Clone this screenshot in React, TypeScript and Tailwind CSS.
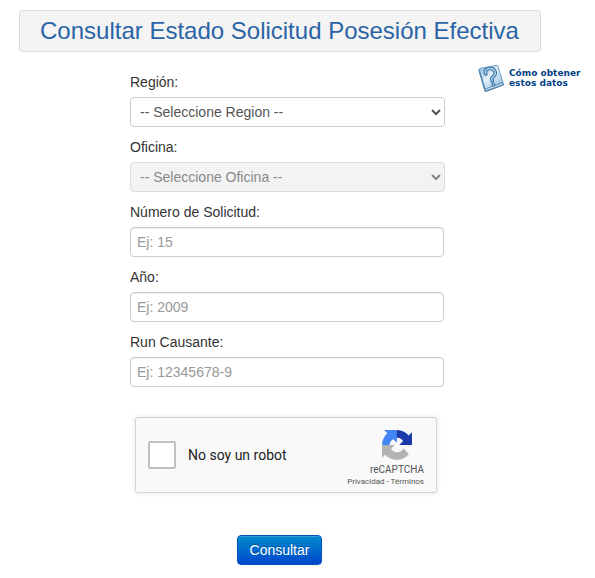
import React, { useState } from 'react';

interface TextField {
  id: string;
  label: string;
  placeholder: string;
}

const textFields: TextField[] = [
  { id: 'numero', label: 'Número de Solicitud:', placeholder: 'Ej: 15' },
  { id: 'anio', label: 'Año:', placeholder: 'Ej: 2009' },
  { id: 'run', label: 'Run Causante:', placeholder: 'Ej: 12345678-9' },
];

const BookIcon: React.FC = () => (
  <svg className="w-7 h-7 shrink-0" viewBox="0 0 28 28" fill="none" aria-hidden="true">
    <defs>
      <linearGradient id="cover" x1="3" y1="3" x2="23" y2="25" gradientUnits="userSpaceOnUse">
        <stop stopColor="#8fbbdc" />
        <stop offset="0.45" stopColor="#e3f0f9" />
        <stop offset="1" stopColor="#94bcdb" />
      </linearGradient>
    </defs>
    <path d="M1.500 5.500L7.500 27Q8 28.300 9.500 27.800L26.500 21.500Q27.300 21 26.800 19.500L25.500 16.500Z" fill="#4a7ba5" />
    <path d="M8.500 25L25.500 19L26 20.500L9 26.600Z" fill="#b9d4e8" />
    <path d="M2 6Q1.700 4.900 3 4.500L19 1.400Q20.500 1.100 20.900 2.400L25.500 17Q25.800 18 24.700 18.500L9.500 24.500Q8 25 7.500 23.700Z" fill="url(#cover)" stroke="#6d9dc4" />
    <path d="M2.200 6.500L7.800 25" stroke="#5189b5" strokeWidth="1.500" />
    <path d="M8.800 9.800C7 6.500 10 4.300 13.500 4.500C18 4.800 19.500 9.200 17 11.700C15 13.600 14.300 14.300 15.300 16.800" stroke="#34709f" strokeWidth="3.600" strokeLinecap="round" />
    <path d="M8.800 9.800C7 6.500 10 4.300 13.500 4.500C18 4.800 19.500 9.200 17 11.700C15 13.600 14.300 14.300 15.300 16.800" stroke="#b5d6ec" strokeWidth="1.400" strokeLinecap="round" />
    <circle cx="16.300" cy="20.500" r="1.500" fill="#8fbde0" stroke="#34709f" />
  </svg>
);

const RecaptchaLogo: React.FC = () => (
  <svg className="w-[30px] h-[30px]" viewBox="0 0 64 64" aria-hidden="true">
    <path
      fill="#1c3aa9"
      d="M64 31.955l-.033-1.37V4.687l-7.16 7.16C50.948 4.674 42.033.093 32.05.093c-10.4 0-19.622 4.96-25.458 12.64l11.736 11.86a15.55 15.55 0 0 1 4.754-5.334c2.05-1.6 4.952-2.906 8.968-2.906.485 0 .86.057 1.135.163 4.976.393 9.288 3.14 11.828 7.124l-8.307 8.307L64 31.953"
    />
    <path
      fill="#4285f4"
      d="M31.862.094l-1.37.033H4.594l7.16 7.16C4.58 13.147 0 22.06 0 32.046c0 10.4 4.96 19.622 12.64 25.458L24.5 45.768a15.55 15.55 0 0 1-5.334-4.754c-1.6-2.05-2.906-4.952-2.906-8.968 0-.485.057-.86.163-1.135.393-4.976 3.14-9.288 7.124-11.828l8.307 8.307L31.86.095"
    />
    <path
      fill="#b3b3b3"
      d="M.001 32.045l.033 1.37v25.898l7.16-7.16c5.86 7.173 14.774 11.754 24.76 11.754 10.4 0 19.622-4.96 25.458-12.64l-11.736-11.86a15.55 15.55 0 0 1-4.754 5.334c-2.05 1.6-4.952 2.906-8.968 2.906-.485 0-.86-.057-1.135-.163-4.976-.393-9.288-3.14-11.828-7.124l8.307-8.307c-10.522.04-22.4.066-27.295-.005"
    />
  </svg>
);

const App: React.FC = () => {
  const [region, setRegion] = useState('');
  const [values, setValues] = useState<Record<string, string>>({});
  const [isHuman, setIsHuman] = useState(false);

  const handleSubmit = (e: React.FormEvent) => {
    e.preventDefault();
  };

  return (
    <div className="min-h-screen bg-white pt-[10px] pb-3 font-['Liberation_Sans',Arial,sans-serif] text-sm leading-5 text-[#333333]">
      <header className="ml-[19px] mr-[54px] h-[42px] px-5 flex items-center border border-[#dddddd] rounded bg-[#f4f4f4]">
        <h1 className="text-2xl leading-10 text-[#2a64a7] whitespace-nowrap">
          Consultar Estado Solicitud Posesión Efectiva
        </h1>
      </header>

      <main className="mt-5 pl-[130px] pr-4 flex items-start gap-8">
        <form onSubmit={handleSubmit} className="flex-1 max-w-[400px]">
          <div className="flex flex-col gap-[10px]">
            <div className="flex flex-col gap-[5px]">
              <label htmlFor="region">Región:</label>
              <select
                id="region"
                value={region}
                onChange={(e) => setRegion(e.target.value)}
                className="h-[30px] px-[5px] border border-[#cccccc] rounded bg-white text-[#555555]"
              >
                <option value="">-- Seleccione Region --</option>
              </select>
            </div>

            <div className="flex flex-col gap-[5px]">
              <label htmlFor="oficina">Oficina:</label>
              <select
                id="oficina"
                disabled
                className="h-[30px] px-[5px] border border-[#cccccc] rounded bg-[#eeeeee] text-[#555555] opacity-70"
              >
                <option value="">-- Seleccione Oficina --</option>
              </select>
            </div>

            {textFields.map((field) => (
              <div key={field.id} className="flex flex-col gap-[5px]">
                <label htmlFor={field.id}>{field.label}</label>
                <input
                  id={field.id}
                  type="text"
                  value={values[field.id] ?? ''}
                  onChange={(e) => setValues({ ...values, [field.id]: e.target.value })}
                  placeholder={field.placeholder}
                  className="h-[30px] mr-px px-[6px] border border-[#cccccc] rounded bg-white text-[#555555] placeholder:text-[#999999] shadow-[inset_0_1px_1px_rgba(0,0,0,0.075)]"
                />
              </div>
            ))}
          </div>

          <div className="mt-[30px] ml-[5px] w-[302px] h-[76px] px-3 flex items-center border border-[#d3d3d3] rounded-[3px] bg-[#f9f9f9] shadow-[0_0_4px_1px_rgba(0,0,0,0.08)] font-[Roboto,sans-serif]">
            <input
              id="robot"
              type="checkbox"
              checked={isHuman}
              onChange={(e) => setIsHuman(e.target.checked)}
              className="appearance-none w-7 h-7 border-2 border-[#c1c1c1] rounded-[2px] bg-white checked:bg-[#4285f4]"
            />
            <label htmlFor="robot" className="ml-3 text-[#222222]">
              No soy un robot
            </label>
            <div className="ml-auto pt-2 flex flex-col items-end text-[#555555]">
              <div className="mr-3">
                <RecaptchaLogo />
              </div>
              <div className="mt-1 text-[10px] leading-3">reCAPTCHA</div>
              <div className="text-[8px] leading-3">
                <a href="#privacidad">Privacidad</a> - <a href="#terminos">Términos</a>
              </div>
            </div>
          </div>

          <div className="mt-[42px] pr-4 flex justify-center">
            <button
              type="submit"
              className="h-[30px] px-3 border border-[#0055bb] rounded bg-linear-to-b from-[#0088cc] to-[#0044cc] text-white shadow-[inset_0_1px_0_rgba(255,255,255,0.2),0_1px_2px_rgba(0,0,0,0.05)] [text-shadow:0_-1px_0_rgba(0,0,0,0.25)]"
            >
              Consultar
            </button>
          </div>
        </form>

        <a
          href="#ayuda"
          className="-mt-2 w-[102px] shrink-0 flex items-center gap-1 whitespace-nowrap font-['DejaVu_Sans',Verdana,sans-serif] text-[9px] leading-[10px] font-bold text-[#003f87]"
        >
          <BookIcon />
          <span>
            Cómo obtener
            <br />
            estos datos
          </span>
        </a>
      </main>
    </div>
  );
};

export default App;
